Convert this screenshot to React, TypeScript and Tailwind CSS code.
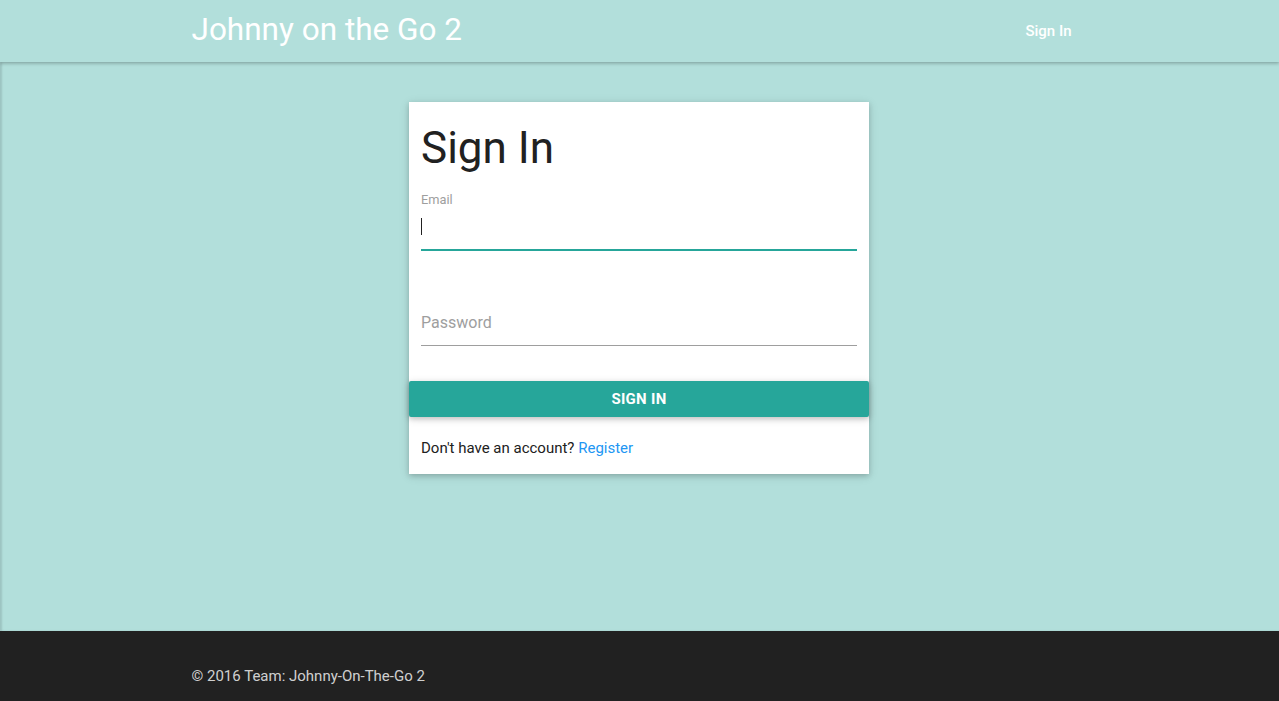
export default function App() {
  return (
    <div className="flex h-[701px] flex-col bg-[#b2dfdb] font-['Roboto','Liberation_Sans',sans-serif]">
      <header className="relative z-10 h-[62px] shrink-0 bg-[#b2dfdb] pr-px shadow-[0_2px_3px_rgba(0,0,0,0.2)]">
        <div className="mx-auto flex h-full w-[895px] items-center justify-between">
          <a className="pb-[2px] text-[31.5px] leading-none text-white">Johnny on the Go 2</a>
          <a className="px-[15px] text-[15px] font-medium text-white">Sign In</a>
        </div>
      </header>

      <main className="flex flex-1 justify-center pr-px pt-[40px] shadow-[inset_2px_0_2px_rgba(0,0,0,0.12)]">
        <div className="h-fit w-[460px] bg-white pt-[21px] shadow-[0_2px_5px_rgba(0,0,0,0.16),0_2px_10px_rgba(0,0,0,0.12)]">
          <h3 className="px-3 text-[44px] leading-[51px] text-[#212121]">Sign In</h3>

          <div className="mt-[18px] px-3">
            <label className="block text-[12.8px] leading-[16px] text-[#9e9e9e]">Email</label>
            <div className="relative mt-[11px] h-[32px] border-b-2 border-[#26a69a]">
              <span className="absolute left-0 top-[-1px] h-[17px] w-px bg-[#212121]" />
            </div>
          </div>

          <div className="mt-[62px] px-3">
            <div className="h-[33px] border-b border-[#9e9e9e] text-[16px] leading-[20px] text-[#9e9e9e]">Password</div>
          </div>

          <button className="mt-[35px] block h-[36px] w-full rounded-[2px] bg-[#26a69a] text-[15px] font-bold tracking-[0.3px] text-white shadow-[0_2px_5px_rgba(0,0,0,0.16),0_2px_10px_rgba(0,0,0,0.12)]">
            SIGN IN
          </button>

          <p className="px-3 pb-[17px] pt-[22px] text-[15px] leading-[18px] text-[#212121]">
            Don't have an account? <a className="text-[#2196f3]">Register</a>
          </p>
        </div>
      </main>

      <footer className="h-[70px] shrink-0 bg-[#212121] pr-px">
        <div className="mx-auto w-[895px] pt-[36px] text-[15px] leading-[18px] text-[rgba(255,255,255,0.8)]">
          © 2016 Team: Johnny-On-The-Go 2
        </div>
      </footer>
    </div>
  )
}
